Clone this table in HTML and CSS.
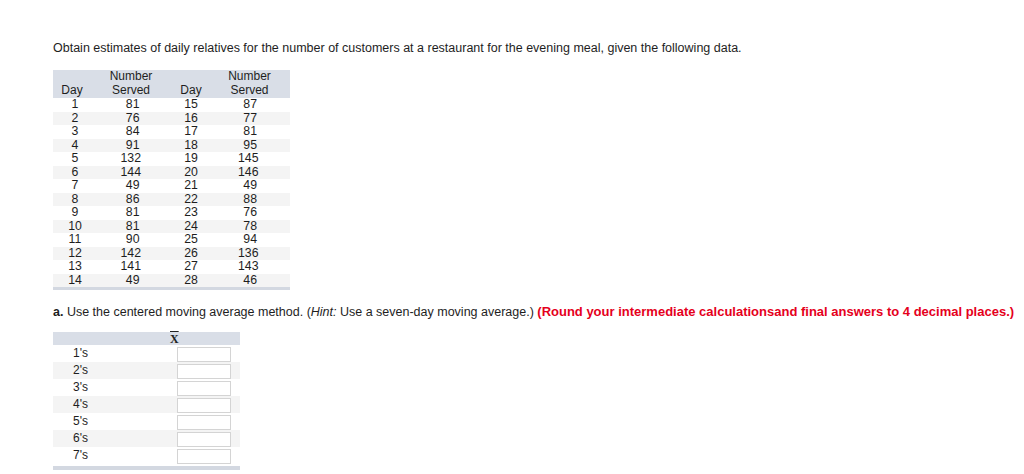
FILE: index.html
```html
<!DOCTYPE html>
<html>
<head>
<meta charset="utf-8">
<link rel="stylesheet" href="styles.css">
</head>
<body>
<div class="page">
  <p class="intro">Obtain estimates of daily relatives for the number of customers at a restaurant for the evening meal, given the following data.</p>

  <table class="data">
    <colgroup>
      <col class="c-day"><col class="c-num"><col class="c-day"><col class="c-num2">
    </colgroup>
    <thead>
      <tr>
        <th>Day</th><th>Number<br>Served</th><th class="d2">Day</th><th>Number<br>Served</th>
      </tr>
    </thead>
    <tbody>
      <tr><td class="d1">1</td><td class="n1"><span>81</span></td><td class="d2">15</td><td class="n2"><span>87</span></td></tr>
      <tr><td class="d1">2</td><td class="n1"><span>76</span></td><td class="d2">16</td><td class="n2"><span>77</span></td></tr>
      <tr><td class="d1">3</td><td class="n1"><span>84</span></td><td class="d2">17</td><td class="n2"><span>81</span></td></tr>
      <tr><td class="d1">4</td><td class="n1"><span>91</span></td><td class="d2">18</td><td class="n2"><span>95</span></td></tr>
      <tr><td class="d1">5</td><td class="n1"><span>132</span></td><td class="d2">19</td><td class="n2"><span>145</span></td></tr>
      <tr><td class="d1">6</td><td class="n1"><span>144</span></td><td class="d2">20</td><td class="n2"><span>146</span></td></tr>
      <tr><td class="d1">7</td><td class="n1"><span>49</span></td><td class="d2">21</td><td class="n2"><span>49</span></td></tr>
      <tr><td class="d1">8</td><td class="n1"><span>86</span></td><td class="d2">22</td><td class="n2"><span>88</span></td></tr>
      <tr><td class="d1">9</td><td class="n1"><span>81</span></td><td class="d2">23</td><td class="n2"><span>76</span></td></tr>
      <tr><td class="d1">10</td><td class="n1"><span>81</span></td><td class="d2">24</td><td class="n2"><span>78</span></td></tr>
      <tr><td class="d1">11</td><td class="n1"><span>90</span></td><td class="d2">25</td><td class="n2"><span>94</span></td></tr>
      <tr><td class="d1">12</td><td class="n1"><span>142</span></td><td class="d2">26</td><td class="n2"><span>136</span></td></tr>
      <tr><td class="d1">13</td><td class="n1"><span>141</span></td><td class="d2">27</td><td class="n2"><span>143</span></td></tr>
      <tr><td class="d1">14</td><td class="n1"><span>49</span></td><td class="d2">28</td><td class="n2"><span>46</span></td></tr>
    </tbody>
  </table>

  <p class="question"><b>a.</b> Use the centered moving average method. (<i>Hint:</i> Use a seven-day moving average.) <span class="warn">(Round your intermediate calculationsand final answers to 4 decimal places.)</span></p>

  <div class="answer">
    <div class="ans-head"><span class="xbar">X</span></div>
    <div class="ans-row"><span class="lbl">1's</span><span class="box"></span></div>
    <div class="ans-row alt"><span class="lbl">2's</span><span class="box"></span></div>
    <div class="ans-row"><span class="lbl">3's</span><span class="box"></span></div>
    <div class="ans-row alt"><span class="lbl">4's</span><span class="box"></span></div>
    <div class="ans-row"><span class="lbl">5's</span><span class="box"></span></div>
    <div class="ans-row alt"><span class="lbl">6's</span><span class="box"></span></div>
    <div class="ans-row"><span class="lbl">7's</span><span class="box"></span></div>
    <div class="ans-foot"></div>
  </div>
</div>
</body>
</html>
```

FILE: styles.css
```css
html, body {
  margin: 0;
  padding: 0;
  background: #fff;
}

.page {
  padding: 41px 0 0 53px;
  font-family: "Liberation Sans", Arial, sans-serif;
  font-size: 12px;
  color: #1e1e1e;
}

.intro {
  margin: 0;
  line-height: 14px;
  font-size: 12.5px;
}

.data {
  margin-top: 15px;
  border-collapse: collapse;
  table-layout: fixed;
  width: 237px;
  border-bottom: 3px solid #d3d8e1;
}

.c-day { width: 38px; }
.c-num { width: 80px; }
.c-num2 { width: 81px; }

.data th {
  background: #d9dee7;
  font-weight: normal;
  line-height: 13.5px;
  padding: 0 0 1px 0;
  vertical-align: bottom;
  text-align: center;
}

.data td {
  padding: 0;
  line-height: 13.5px;
  height: 13.5px;
  text-align: center;
  font-size: 12.3px;
}

.data tbody tr:nth-child(even) td {
  background: #f4f4f4;
}

.data td.d1 { padding-left: 6px; }
.data th.d2, .data td.d2 { padding-left: 2px; }

.data td span {
  display: inline-block;
  width: 19px;
  text-align: right;
}

.data td.n1 { padding-right: 2px; }
.data td.n2 { padding-right: 4px; }

.question {
  margin: 15px 0 0 0;
  line-height: 14px;
  font-size: 12.5px;
}

.warn {
  color: #e5001c;
  font-weight: bold;
  font-size: 13px;
}

.answer {
  margin-top: 13px;
  width: 187px;
}

.ans-head {
  height: 13px;
  background: #d9dee7;
  padding-left: 117px;
  display: flex;
  align-items: center;
}

.xbar {
  font-family: "Liberation Serif", "Times New Roman", serif;
  font-size: 12px;
  font-weight: bold;
  line-height: 12px;
  text-decoration: overline;
  color: #222;
}

.ans-row {
  display: flex;
  align-items: flex-start;
  height: 17px;
}

.ans-row.alt {
  background: #f4f4f4;
}

.lbl {
  width: 104px;
  padding-left: 20px;
  line-height: 17px;
}

.box {
  margin-top: 2px;
  width: 52px;
  height: 13px;
  background: #fff;
  border: 1px solid #d4d4d4;
}

.ans-foot {
  margin-top: 2px;
  height: 4px;
  background: #d3d8e1;
}
```
